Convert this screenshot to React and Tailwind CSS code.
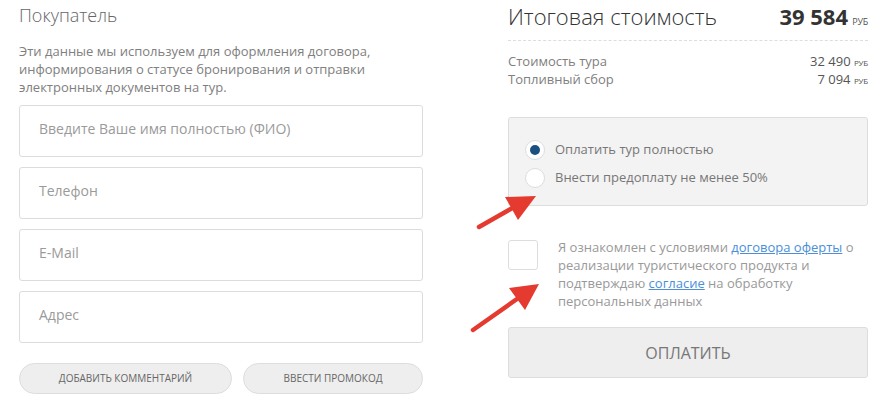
import React from 'react';

const Rub = ({ className = '' }) => (
  <span className={`text-[8px] leading-none tracking-tight ${className}`}>РУБ</span>
);

const Field = ({ placeholder }) => (
  <div className="h-[52px] border border-[#dcdcdc] rounded-[3px] bg-white flex items-center px-[19px] pb-[5px]">
    <span className="text-[14px] text-[#9a9a9a]">{placeholder}</span>
  </div>
);

const Arrow = ({ className, tail, tip, head }) => (
  <svg className={`absolute pointer-events-none ${className}`} width="886" height="411" viewBox="0 0 886 411">
    <line x1={tail[0]} y1={tail[1]} x2={(head[0][0] + head[1][0]) / 2} y2={(head[0][1] + head[1][1]) / 2} stroke="#e53a2f" strokeWidth="4.5" strokeLinecap="round" />
    <polygon points={`${tip[0]},${tip[1]} ${head[0][0]},${head[0][1]} ${head[1][0]},${head[1][1]}`} fill="#e53a2f" />
  </svg>
);

const App = () => {
  return (
    <div className="relative w-[886px] h-[411px] bg-white overflow-hidden font-['Open_Sans',sans-serif]">
      <div className="flex pl-[19px] pt-[3px]">
        <div className="w-[404px]">
          <h2 className="text-[18px] font-light text-[#666] leading-[24px]">Покупатель</h2>
          <p className="mt-[15px] text-[13px] leading-[18px] text-[#808080]">
            Эти данные мы используем для оформления договора,<br />
            информирования о статусе бронирования и отправки<br />
            электронных документов на тур.
          </p>
          <div className="mt-[9px] flex flex-col gap-[10px]">
            <Field placeholder="Введите Ваше имя полностью (ФИО)" />
            <Field placeholder="Телефон" />
            <Field placeholder="E-Mail" />
            <Field placeholder="Адрес" />
          </div>
          <div className="mt-[20px] flex gap-[11px]">
            <button className="w-[213px] h-[31px] rounded-full bg-[#eee] border border-[#ddd] text-[10px] text-[#666] uppercase">Добавить комментарий</button>
            <button className="w-[180px] h-[31px] rounded-full bg-[#eee] border border-[#ddd] text-[10px] text-[#666] uppercase">Ввести промокод</button>
          </div>
        </div>

        <div className="ml-[85px] w-[360px]">
          <div className="flex items-baseline justify-between pb-[8px] border-b border-dashed border-[#ddd]">
            <span className="text-[22px] font-light text-[#333] leading-[26px]">Итоговая стоимость</span>
            <span className="text-[#333] leading-[26px]">
              <b className="text-[22px] font-bold">39 584</b> <Rub className="text-[9px] text-[#555]" />
            </span>
          </div>
          <div className="mt-[11px] text-[13px] text-[#808080]">
            <div className="flex justify-between items-baseline h-[18px] leading-[18px]">
              <span>Стоимость тура</span>
              <span className="text-[#555]">32 490 <Rub /></span>
            </div>
            <div className="flex justify-between items-baseline h-[18px] leading-[18px]">
              <span>Топливный сбор</span>
              <span className="text-[#555]">7 094 <Rub /></span>
            </div>
          </div>

          <div className="mt-[29px] h-[89px] bg-[#f3f3f3] border border-[#ddd] rounded-[3px] pl-[16px] pt-[22px] flex flex-col gap-[8px]">
            <label className="flex items-center gap-[10px] text-[13px] text-[#777]">
              <span className="w-[20px] h-[20px] rounded-full bg-white border border-[#ddd] flex items-center justify-center">
                <span className="w-[10px] h-[10px] rounded-full bg-[#1b4f80]"></span>
              </span>
              Оплатить тур полностью
            </label>
            <label className="flex items-center gap-[10px] text-[13px] text-[#777]">
              <span className="w-[20px] h-[20px] rounded-full bg-white border border-[#ddd]"></span>
              Внести предоплату не менее 50%
            </label>
          </div>

          <div className="mt-[32px] flex">
            <span className="shrink-0 w-[30px] h-[30px] mt-[2px] bg-white border border-[#ddd] rounded-[3px]"></span>
            <p className="ml-[20px] text-[13px] leading-[18px] text-[#999]">
              Я ознакомлен с условиями <a className="text-[#4a8fd8] underline">договора оферты</a> о<br />
              реализации туристического продукта и<br />
              подтверждаю <a className="text-[#4a8fd8] underline">согласие</a> на обработку<br />
              персональных данных
            </p>
          </div>

          <button className="mt-[17px] w-[360px] h-[51px] bg-[#eee] border border-[#ddd] rounded-[3px] text-[16px] text-[#777]">ОПЛАТИТЬ</button>
        </div>
      </div>

      <Arrow className="left-0 top-0" tail={[479, 227]} tip={[536, 196]} head={[[505, 197], [518, 220]]} />
      <Arrow className="left-0 top-0" tail={[473, 330]} tip={[539, 284]} head={[[509, 288], [525, 310]]} />
    </div>
  );
};

export default App;
